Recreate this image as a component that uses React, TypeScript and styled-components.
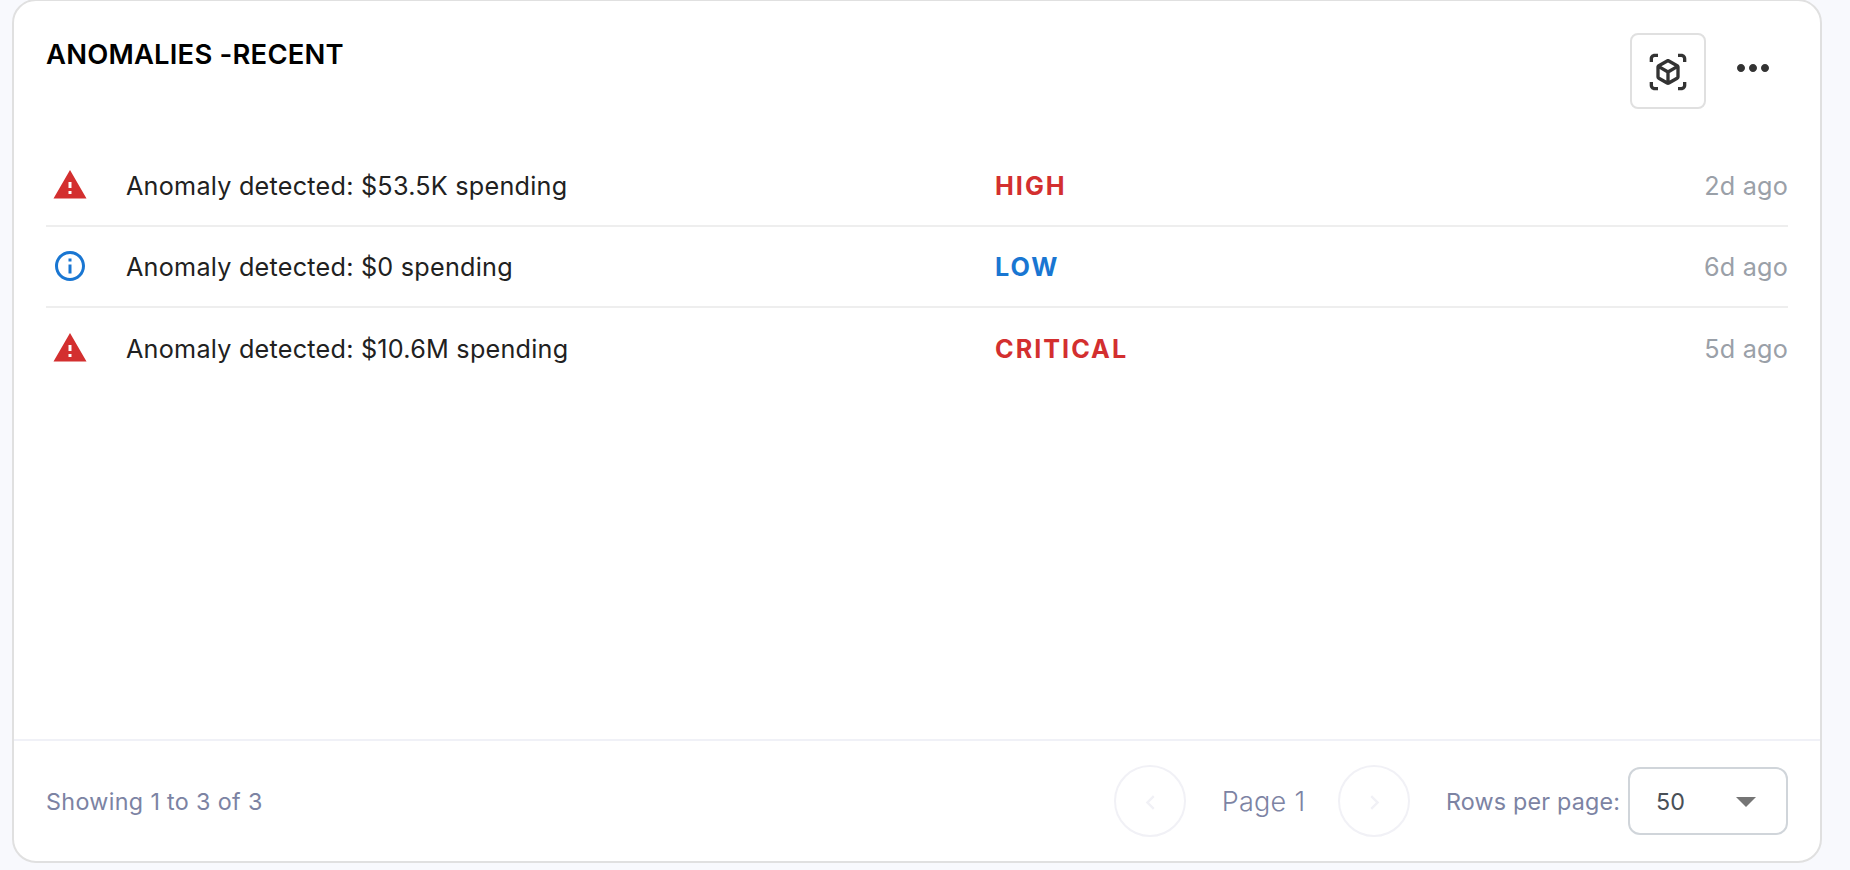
import React from "react";
import styled, { createGlobalStyle } from "styled-components";
import {
  MdArrowDropDown,
  MdChevronLeft,
  MdChevronRight,
  MdInfoOutline,
  MdMoreHoriz,
  MdOutlineViewInAr,
  MdWarning,
} from "react-icons/md";

type Severity = "HIGH" | "LOW" | "CRITICAL";

interface Anomaly {
  id: number;
  message: string;
  severity: Severity;
  time: string;
}

const anomalies: Anomaly[] = [
  { id: 1, message: "Anomaly detected: $53.5K spending", severity: "HIGH", time: "2d ago" },
  { id: 2, message: "Anomaly detected: $0 spending", severity: "LOW", time: "6d ago" },
  { id: 3, message: "Anomaly detected: $10.6M spending", severity: "CRITICAL", time: "5d ago" },
];

const severityColors: Record<Severity, string> = {
  HIGH: "#d32f2f",
  LOW: "#1976d2",
  CRITICAL: "#d32f2f",
};

const GlobalStyle = createGlobalStyle`
  * {
    box-sizing: border-box;
  }

  body {
    margin: 0;
    background: #f8f9fd;
    font-family: 'Inter', sans-serif;
    overflow: hidden;
  }
`;

const Card = styled.section`
  display: flex;
  flex-direction: column;
  width: 1810px;
  height: 864px;
  margin: -1px 0 0 12px;
  background: #ffffff;
  border: 2px solid #e0e0e0;
  border-radius: 24px;
`;

const Header = styled.header`
  display: flex;
  justify-content: space-between;
  align-items: flex-start;
  height: 145px;
  padding: 32px 32px 0;
`;

const Title = styled.h2`
  margin: 4px 0 0;
  font-size: 27.4px;
  font-weight: 600;
  line-height: 34px;
  letter-spacing: 0.22px;
  color: #000000;
`;

const HeaderActions = styled.div`
  display: flex;
  align-items: flex-start;
  gap: 23px;
  padding-right: 11px;
`;

const ViewButton = styled.button`
  display: flex;
  align-items: center;
  justify-content: center;
  width: 76px;
  height: 76px;
  padding: 2px 0 0;
  background: #ffffff;
  border: 2px solid #e0e0e0;
  border-radius: 8px;
  color: #333333;
  cursor: pointer;
`;

const MenuButton = styled.button`
  display: flex;
  margin-top: 11px;
  padding: 0;
  background: transparent;
  border: none;
  color: #333333;
  cursor: pointer;
`;

const AnomalyList = styled.ul`
  flex: 1;
  margin: 0;
  padding: 0 32px;
  list-style: none;
`;

const AnomalyRow = styled.li`
  display: grid;
  grid-template-columns: 80px 869px 1fr auto;
  align-items: center;
  height: 81px;
  border-bottom: 2px solid #eeeeee;
  font-size: 25.2px;
  line-height: 32px;

  &:last-child {
    height: 80px;
    border-bottom: none;
  }
`;

const SeverityIcon = styled.span<{ $color: string }>`
  display: flex;
  padding: 0 0 1px 6px;
  color: ${(props) => props.$color};
`;

const Message = styled.span`
  padding-top: 1px;
  letter-spacing: 0.24px;
  color: #212121;
`;

const SeverityLabel = styled.span<{ $color: string }>`
  padding-top: 1px;
  font-weight: 700;
  letter-spacing: 2px;
  color: ${(props) => props.$color};
`;

const Time = styled.span`
  padding-top: 1px;
  letter-spacing: 0.2px;
  color: #9aa0a8;
`;

const Footer = styled.footer`
  display: flex;
  justify-content: space-between;
  align-items: center;
  height: 122px;
  padding: 0 32px;
  border-top: 2px solid #f0f1f7;
  font-size: 23.3px;
  line-height: 30px;
  color: #7c83a3;
`;

const Summary = styled.span`
  padding-top: 2px;
  letter-spacing: 0.35px;
`;

const Pagination = styled.div`
  display: flex;
  align-items: center;
`;

const PageButton = styled.button`
  display: flex;
  align-items: center;
  justify-content: center;
  width: 72px;
  height: 72px;
  padding: 2px 0 0;
  background: transparent;
  border: 2px solid #f1f1f6;
  border-radius: 50%;
  color: #f1f1f6;
`;

const PageLabel = styled.span`
  width: 152px;
  padding: 2px 0 0 3px;
  font-size: 27px;
  font-weight: 300;
  letter-spacing: 0.3px;
  text-align: center;
`;

const RowsLabel = styled.span`
  width: 182px;
  margin-left: 36px;
  padding-top: 2px;
  letter-spacing: 0.2px;
  white-space: nowrap;
`;

const RowsSelect = styled.button`
  display: flex;
  align-items: center;
  justify-content: space-between;
  width: 160px;
  height: 68px;
  padding: 0 16px 0 26px;
  background: #ffffff;
  border: 2px solid #d0d5da;
  border-radius: 12px;
  font-family: inherit;
  font-size: 23.3px;
  letter-spacing: 0.2px;
  color: #495057;

  svg {
    color: #757575;
  }
`;

const App: React.FC = () => {
  return (
    <>
      <GlobalStyle />
      <Card>
        <Header>
          <Title>ANOMALIES -RECENT</Title>
          <HeaderActions>
            <ViewButton aria-label="Open view">
              <MdOutlineViewInAr size={40} />
            </ViewButton>
            <MenuButton aria-label="More options">
              <MdMoreHoriz size={48} />
            </MenuButton>
          </HeaderActions>
        </Header>

        <AnomalyList>
          {anomalies.map((anomaly) => {
            const color = severityColors[anomaly.severity];
            return (
              <AnomalyRow key={anomaly.id}>
                <SeverityIcon $color={color}>
                  {anomaly.severity === "LOW" ? <MdInfoOutline size={36} /> : <MdWarning size={36} />}
                </SeverityIcon>
                <Message>{anomaly.message}</Message>
                <SeverityLabel $color={color}>{anomaly.severity}</SeverityLabel>
                <Time>{anomaly.time}</Time>
              </AnomalyRow>
            );
          })}
        </AnomalyList>

        <Footer>
          <Summary>Showing 1 to 3 of 3</Summary>
          <Pagination>
            <PageButton aria-label="Previous page" disabled>
              <MdChevronLeft size={29} />
            </PageButton>
            <PageLabel>Page 1</PageLabel>
            <PageButton aria-label="Next page" disabled>
              <MdChevronRight size={29} />
            </PageButton>
            <RowsLabel>Rows per page:</RowsLabel>
            <RowsSelect>
              50
              <MdArrowDropDown size={48} />
            </RowsSelect>
          </Pagination>
        </Footer>
      </Card>
    </>
  );
};

export default App;
